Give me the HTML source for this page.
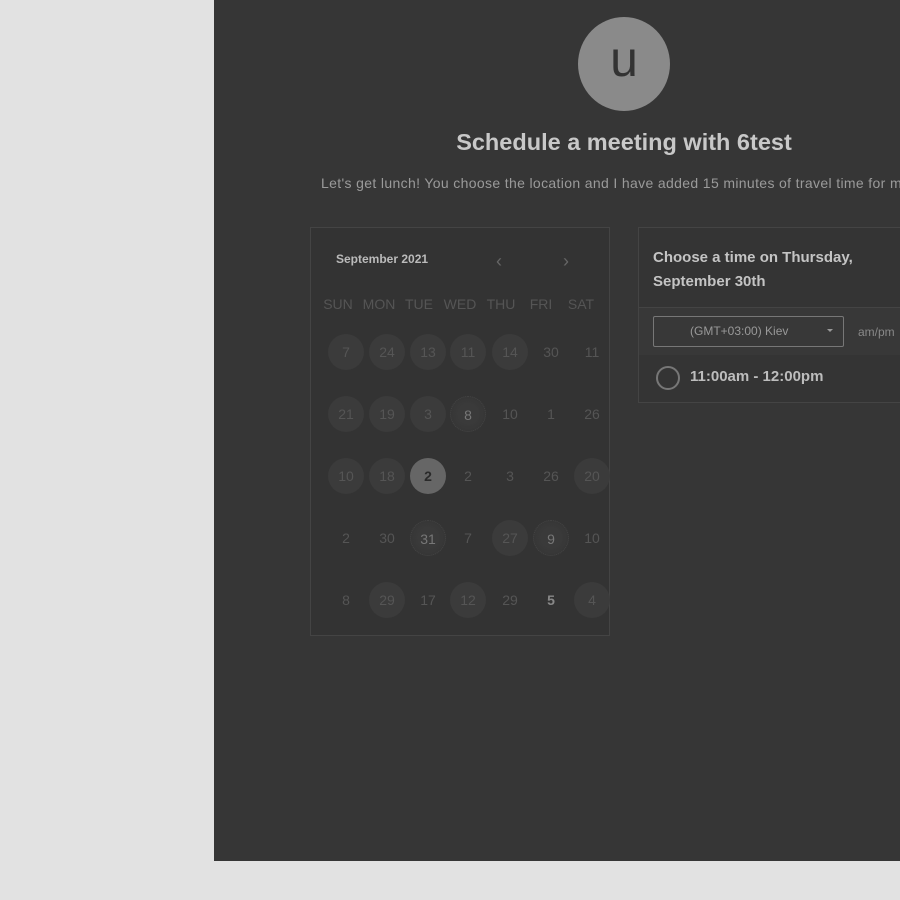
<!DOCTYPE html>
<html><head><style>
body{margin:0;width:900px;height:900px;background:#e2e2e2;font-family:"Liberation Sans",sans-serif;overflow:hidden;position:relative}
.panel{position:absolute;left:214px;top:0;width:686px;height:861px;background:#363636}
.av{position:absolute;left:578px;top:17px;width:92px;height:94px;border-radius:50%;background:#8a8a8a;color:#333;font-size:50px;text-align:center;line-height:84px}
.t{position:absolute;left:0;width:1248px;top:129px;text-align:center;font-size:23.5px;font-weight:900;color:#c8c8c8}
.s{position:absolute;left:321px;top:175px;font-size:14px;letter-spacing:0.35px;color:#9a9a9a;white-space:nowrap}
.cal{position:absolute;left:310px;top:227px;width:298px;height:407px;border:1px solid #444;background:#333}
.c{position:absolute;width:36px;height:36px;margin:-18px 0 0 -18px;border-radius:50%;text-align:center;line-height:36px;font-size:14px;color:#555}
.b{background:#3b3b3b}
.d{background:radial-gradient(circle,#3a3a3a 40%,#333 100%);border:1px dotted #444;box-sizing:border-box}
.h{position:absolute;top:296px;font-size:14px;color:#555;width:40px;margin-left:-20px;text-align:center}
.card{position:absolute;left:638px;top:227px;width:280px;height:174px;border:1px solid #444;background:#343434}
</style></head><body>
<div class="panel"></div>
<div class="av">u</div>
<div class="t">Schedule a meeting with 6test</div>
<div class="s">Let's get lunch! You choose the location and I have added 15 minutes of travel time for my</div>
<div class="cal"></div>
<div style="position:absolute;left:336px;top:252px;font-size:12px;font-weight:bold;color:#bbb">September 2021</div>
<div style="position:absolute;left:496px;top:251px;font-size:18px;color:#666">&#8249;</div>
<div style="position:absolute;left:563px;top:251px;font-size:18px;color:#666">&#8250;</div>
<div class="h" style="left:338px">SUN</div><div class="h" style="left:379px">MON</div><div class="h" style="left:419px">TUE</div><div class="h" style="left:460px">WED</div><div class="h" style="left:501px">THU</div><div class="h" style="left:541px">FRI</div><div class="h" style="left:581px">SAT</div>
<div class="c b" style="left:346px;top:352px">7</div><div class="c b" style="left:387px;top:352px">24</div><div class="c b" style="left:428px;top:352px">13</div><div class="c b" style="left:468px;top:352px">11</div><div class="c b" style="left:510px;top:352px">14</div><div class="c" style="left:551px;top:352px">30</div><div class="c" style="left:592px;top:352px">11</div>
<div class="c b" style="left:346px;top:414px">21</div><div class="c b" style="left:387px;top:414px">19</div><div class="c b" style="left:428px;top:414px">3</div><div class="c d" style="left:468px;top:414px;color:#777">8</div><div class="c" style="left:510px;top:414px">10</div><div class="c" style="left:551px;top:414px">1</div><div class="c" style="left:592px;top:414px">26</div>
<div class="c b" style="left:346px;top:476px">10</div><div class="c b" style="left:387px;top:476px">18</div><div class="c" style="left:428px;top:476px;background:#666;color:#2a2a2a;font-weight:bold">2</div><div class="c" style="left:468px;top:476px">2</div><div class="c" style="left:510px;top:476px">3</div><div class="c" style="left:551px;top:476px">26</div><div class="c b" style="left:592px;top:476px">20</div>
<div class="c" style="left:346px;top:538px">2</div><div class="c" style="left:387px;top:538px">30</div><div class="c d" style="left:428px;top:538px;color:#777">31</div><div class="c" style="left:468px;top:538px">7</div><div class="c b" style="left:510px;top:538px">27</div><div class="c d" style="left:551px;top:538px;color:#777">9</div><div class="c" style="left:592px;top:538px">10</div>
<div class="c" style="left:346px;top:600px">8</div><div class="c b" style="left:387px;top:600px">29</div><div class="c" style="left:428px;top:600px">17</div><div class="c b" style="left:468px;top:600px">12</div><div class="c" style="left:510px;top:600px">29</div><div class="c" style="left:551px;top:600px;color:#888;font-weight:bold">5</div><div class="c b" style="left:592px;top:600px">4</div>
<div class="card"></div>
<div style="position:absolute;left:653px;top:246px;font-size:15px;font-weight:bold;color:#c4c4c4;line-height:24px">Choose a time on Thursday,<br>September 30th</div>
<div style="position:absolute;left:639px;top:307px;width:261px;height:1px;background:#444"></div>
<div style="position:absolute;left:639px;top:308px;width:261px;height:47px;background:#383838"></div>
<div style="position:absolute;left:653px;top:316px;width:189px;height:29px;border:1px solid #777;border-radius:2px;box-sizing:content-box"></div>
<div style="position:absolute;left:690px;top:324px;font-size:12px;color:#999">(GMT+03:00) Kiev</div>
<div style="position:absolute;left:827px;top:329px;width:0;height:0;border-left:3px solid transparent;border-right:3px solid transparent;border-top:3px solid #999"></div>
<div style="position:absolute;left:858px;top:325px;font-size:12px;color:#888">am/pm</div>
<div style="position:absolute;left:656px;top:366px;width:20px;height:20px;border:2px solid #777;border-radius:50%"></div>
<div style="position:absolute;left:690px;top:368px;font-size:15px;font-weight:bold;color:#bdbdbd">11:00am - 12:00pm</div>
</body></html>
